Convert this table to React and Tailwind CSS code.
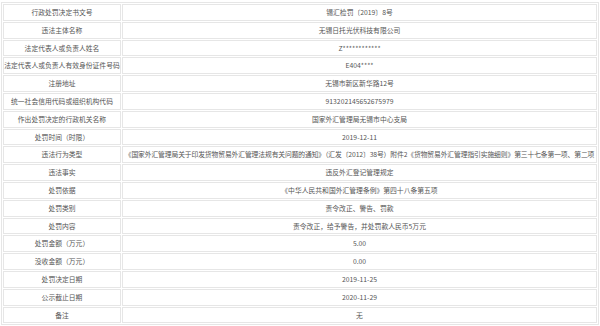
const rows = [
  ["行政处罚决定书文号", "锡汇检罚〔2019〕8号"],
  ["违法主体名称", "无锡日托光伏科技有限公司"],
  ["法定代表人或负责人姓名", "Z************"],
  ["法定代表人或负责人有效身份证件号码", "E404****"],
  ["注册地址", "无锡市新区新华路12号"],
  ["统一社会信用代码或组织机构代码", "913202145652675979"],
  ["作出处罚决定的行政机关名称", "国家外汇管理局无锡市中心支局"],
  ["处罚时间（时限）", "2019-12-11"],
  [
    "违法行为类型",
    "《国家外汇管理局关于印发货物贸易外汇管理法规有关问题的通知》（汇发〔2012〕38号）附件2《货物贸易外汇管理指引实施细则》第三十七条第一项、第二项",
  ],
  ["违法事实", "违反外汇登记管理规定"],
  ["处罚依据", "《中华人民共和国外汇管理条例》第四十八条第五项"],
  ["处罚类别", "责令改正、警告、罚款"],
  ["处罚内容", "责令改正，给予警告，并处罚款人民币5万元"],
  ["处罚金额（万元）", "5.00"],
  ["没收金额（万元）", "0.00"],
  ["处罚决定日期", "2019-11-25"],
  ["公示截止日期", "2020-11-29"],
  ["备注", "无"],
];

export default function App() {
  return (
    <div className="w-[600px] h-[326px] bg-white overflow-hidden pt-[2px]">
      <table
        className="w-[598px] mx-auto border-separate border-spacing-[1px] border border-[#e6e6e6] text-[6.8px] leading-none text-[#555]"
        style={{ fontFamily: '"Noto Sans CJK SC", "Noto Sans", sans-serif' }}
      >
        <tbody>
          {rows.map(([label, value]) => (
            <tr key={label}>
              <td className="w-[118px] h-[16.8px] border border-[#e6e6e6] text-center whitespace-nowrap p-0">
                {label}
              </td>
              <td
                className={`h-[16.8px] border border-[#e6e6e6] text-center whitespace-nowrap p-0 ${
                  value.length > 60 ? "tracking-[-0.12px]" : ""
                }`}
              >
                {value}
              </td>
            </tr>
          ))}
        </tbody>
      </table>
    </div>
  );
}
